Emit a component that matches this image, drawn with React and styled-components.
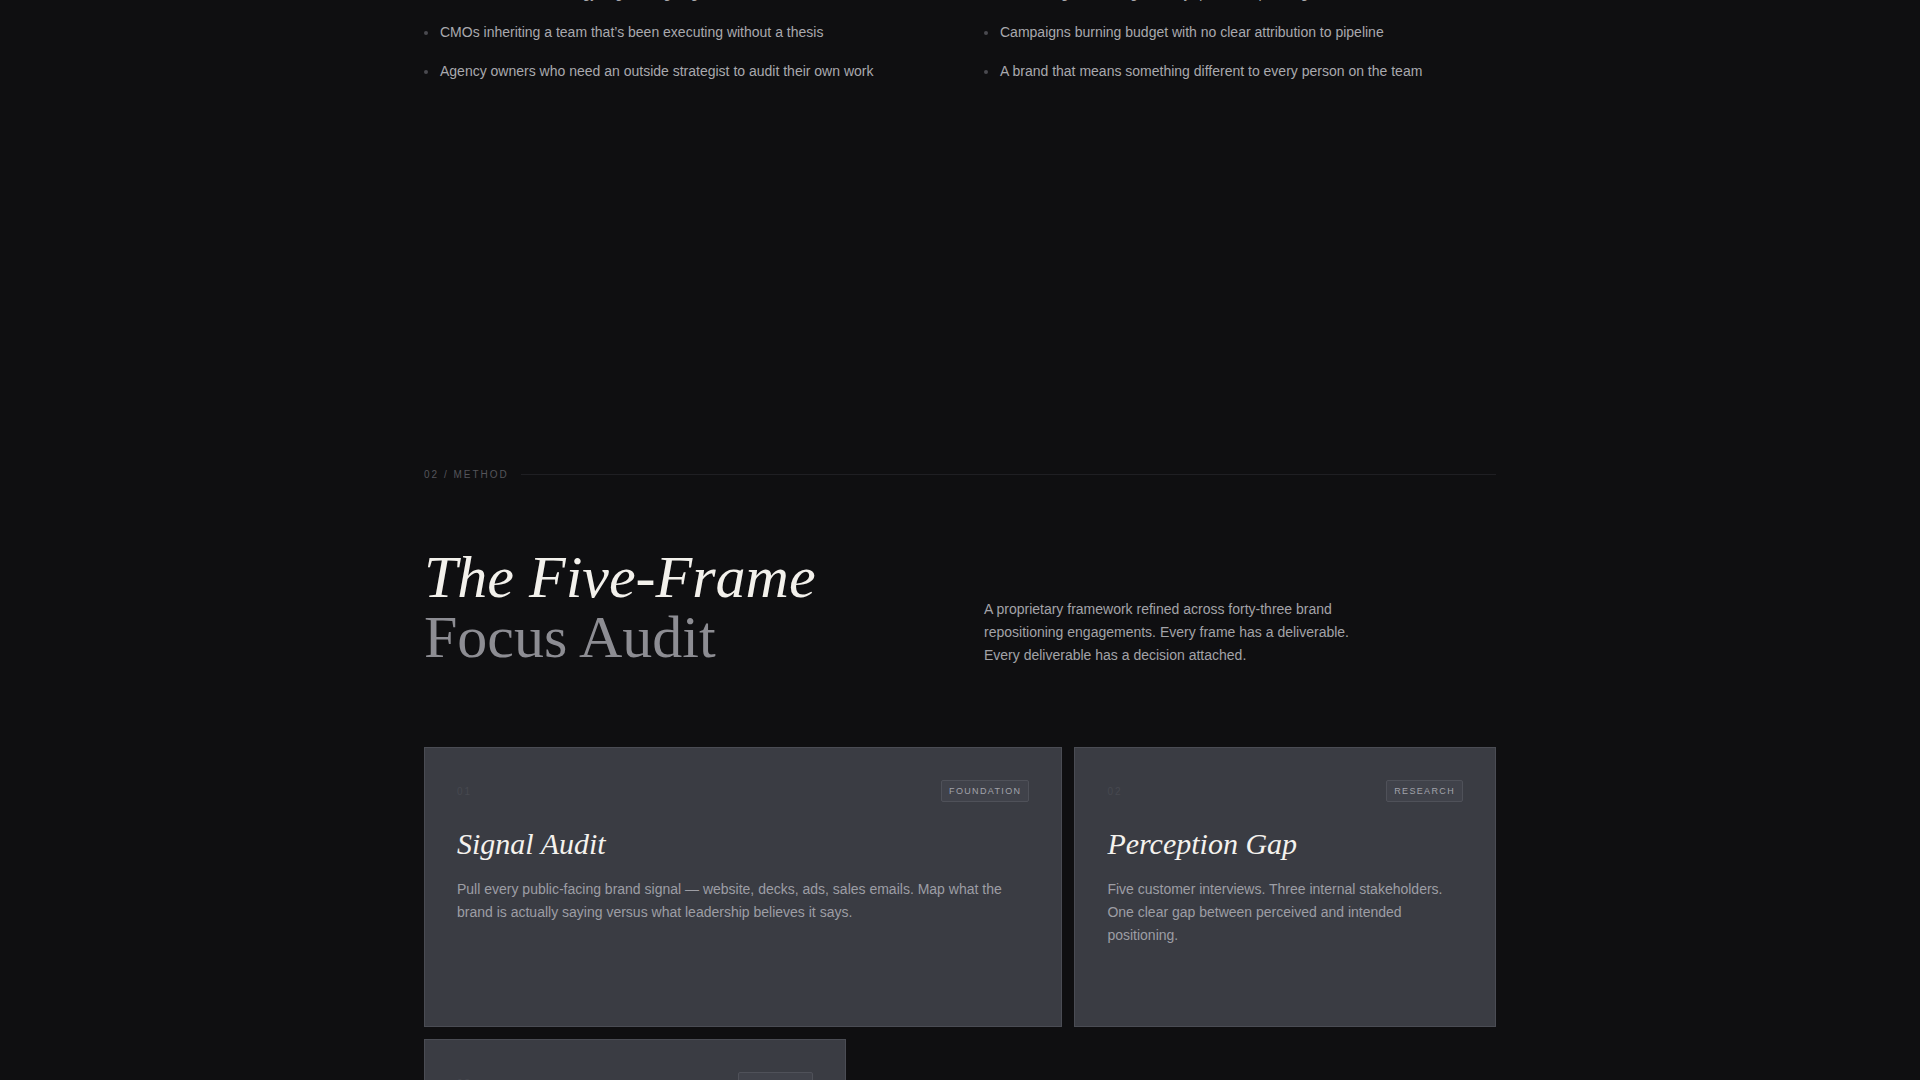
import React from 'react';
import styled, { createGlobalStyle } from 'styled-components';

const GlobalStyle = createGlobalStyle`
    html, body {
        margin: 0;
        padding: 0;
        background: #0f0f11;
    }
    body {
        font-family: "Liberation Sans", Arial, sans-serif;
        overflow: hidden;
    }
`;

const Page = styled.div`
    width: 1072px;
    margin: 0 auto;
`;

const FitSection = styled.section`
    margin-top: -18px;
    padding-bottom: 386px;
`;

const TwoCol = styled.div`
    display: grid;
    grid-template-columns: 1fr 1fr;
    column-gap: 48px;
    align-items: ${props => props.$align || 'start'};
`;

const BulletList = styled.ul`
    list-style: none;
    margin: 0;
    padding: 0;
    display: flex;
    flex-direction: column;
    gap: 16px;
`;

const Bullet = styled.li`
    display: flex;
    align-items: center;
    gap: 12px;
    font-size: 14px;
    line-height: 23px;
    color: #a9a9ae;
    &::before{
        content: '';
        width: 4px;
        height: 4px;
        border-radius: 50%;
        background: #4a4a50;
        flex: none;
    }
`;

const MethodSection = styled.section`
    padding-bottom: 120px;
`;

const Eyebrow = styled.div`
    display: flex;
    align-items: center;
    gap: 12px;
    font-size: 10px;
    letter-spacing: 0.2em;
    color: #55555b;
    text-transform: uppercase;
    &::after{
        content: '';
        flex: 1;
        height: 1px;
        background: #1f1f23;
    }
`;

const Intro = styled(TwoCol)`
    margin-top: 67px;
`;

const Heading = styled.h2`
    margin: 0;
    font-family: "Liberation Serif", "Times New Roman", serif;
    font-weight: 400;
    font-size: 60px;
    line-height: 60px;
    color: #f3f1ec;
    em{
        display: block;
    }
    span{
        display: block;
        color: #8d8d93;
    }
`;

const Lede = styled.p`
    margin: 0;
    max-width: 380px;
    font-size: 14px;
    line-height: 23px;
    color: #a3a3a8;
`;

const FrameGrid = styled.div`
    margin-top: 80px;
    display: grid;
    grid-template-columns: repeat(5, 1fr);
    gap: 12px;
`;

const Card = styled.article`
    grid-column: span ${props => props.$span};
    min-height: 280px;
    box-sizing: border-box;
    padding: 32px;
    background: #3a3c43;
    border: 1px solid #4a4c54;
`;

const CardTop = styled.div`
    display: flex;
    justify-content: space-between;
    align-items: center;
`;

const Index = styled.span`
    font-size: 10px;
    letter-spacing: 0.2em;
    color: #474950;
`;

const Tag = styled.span`
    padding: 6px 7px 5px;
    font-size: 9px;
    line-height: 9px;
    letter-spacing: 0.15em;
    text-transform: uppercase;
    color: #a2a3aa;
    background: #40424a;
    border: 1px solid #4f5159;
    border-radius: 2px;
`;

const CardTitle = styled.h3`
    margin: 24px 0 0;
    font-family: "Liberation Serif", "Times New Roman", serif;
    font-style: italic;
    font-weight: 400;
    font-size: 30px;
    line-height: 36px;
    color: #f4f2ee;
`;

const CardText = styled.p`
    margin: 16px 0 0;
    font-size: 14px;
    line-height: 23px;
    color: #9d9ea5;
`;

const audience = [
    'Founders whose strategy is guessing at growth',
    'CMOs inheriting a team that\u2019s been executing without a thesis',
    'Agency owners who need an outside strategist to audit their own work',
];

const symptoms = [
    'Positioning that changes every quarter depending on who\u2019s in the room',
    'Campaigns burning budget with no clear attribution to pipeline',
    'A brand that means something different to every person on the team',
];

const frames = [
    {
        num: '01',
        tag: 'Foundation',
        title: 'Signal Audit',
        text: 'Pull every public-facing brand signal \u2014 website, decks, ads, sales emails. Map what the brand is actually saying versus what leadership believes it says.',
        span: 3,
    },
    {
        num: '02',
        tag: 'Research',
        title: 'Perception Gap',
        text: 'Five customer interviews. Three internal stakeholders. One clear gap between perceived and intended positioning.',
        span: 2,
    },
    {
        num: '03',
        tag: 'Strategy',
        title: 'Category Frame',
        text: 'Define the arena you compete in, and the one you should be competing in instead.',
        span: 2,
    },
];

const App = () => {
    return (
        <>
            <GlobalStyle />
            <Page>
                <FitSection>
                    <TwoCol>
                        <BulletList>
                            {audience.map(item => <Bullet key={item}>{item}</Bullet>)}
                        </BulletList>
                        <BulletList>
                            {symptoms.map(item => <Bullet key={item}>{item}</Bullet>)}
                        </BulletList>
                    </TwoCol>
                </FitSection>

                <MethodSection>
                    <Eyebrow>02 / Method</Eyebrow>
                    <Intro $align="end">
                        <Heading>
                            <em>The Five-Frame</em>
                            <span>Focus Audit</span>
                        </Heading>
                        <Lede>
                            A proprietary framework refined across forty-three brand repositioning engagements. Every frame has a deliverable. Every deliverable has a decision attached.
                        </Lede>
                    </Intro>
                    <FrameGrid>
                        {frames.map(frame => (
                            <Card key={frame.num} $span={frame.span}>
                                <CardTop>
                                    <Index>{frame.num}</Index>
                                    <Tag>{frame.tag}</Tag>
                                </CardTop>
                                <CardTitle>{frame.title}</CardTitle>
                                <CardText>{frame.text}</CardText>
                            </Card>
                        ))}
                    </FrameGrid>
                </MethodSection>
            </Page>
        </>
    );
}

export default App;
